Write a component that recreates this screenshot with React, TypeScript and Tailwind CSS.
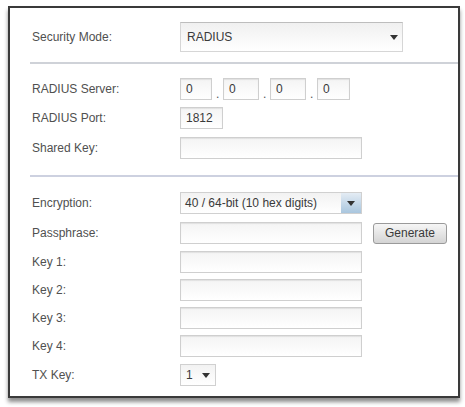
import React from 'react';

const font = { fontFamily: '"Liberation Sans", Arial, sans-serif' };

const Label: React.FC<{ text: string }> = ({ text }) => (
  <div className="w-[148px] shrink-0 text-[12px] text-[#505050] leading-none">{text}</div>
);

const Input: React.FC<{ w: string; value?: string }> = ({ w, value }) => (
  <div
    className={`${w} h-[22px] border border-[#cfcfcf] bg-gradient-to-b from-[#f4f4f4] to-white shadow-[inset_0_1px_1px_rgba(0,0,0,0.08)] px-[5px] flex items-center text-[12px] text-[#3a3a3a]`}
  >
    {value}
  </div>
);

const Arrow: React.FC = () => (
  <svg width="8" height="5" viewBox="0 0 8 5">
    <path d="M0 0 L8 0 L4 5 Z" fill="#333" />
  </svg>
);

const Row: React.FC<{ label: string; children: React.ReactNode; className?: string }> = ({
  label,
  children,
  className,
}) => (
  <div className={`flex items-center h-[22px] ${className ?? 'mb-[6px]'}`}>
    <Label text={label} />
    {children}
  </div>
);

const Dot: React.FC = () => (
  <span className="w-[3px] text-[12px] text-[#555] leading-none">.</span>
);

const App: React.FC = () => {
  return (
    <div className="w-[465px] h-[407px] bg-white pt-[6px] pl-[8px]" style={font}>
      <div className="w-[452px] h-[392px] border-2 border-[#3a3a3a] bg-white shadow-[0_4px_4px_rgba(0,0,0,0.45)] pt-[14px]">
        {/* Security mode */}
        <div className="flex items-center h-[30px] pl-[22px]">
          <Label text="Security Mode:" />
          <div className="w-[223px] h-[30px] border border-[#d6d6d6] border-t-[#bdbdbd] bg-gradient-to-b from-[#f0f0f0] to-white flex items-center justify-between pl-[6px] pr-[4px] text-[12px] text-[#3a3a3a]">
            <span>RADIUS</span>
            <Arrow />
          </div>
        </div>

        <div className="ml-[20px] mt-[10px] h-[2px] bg-[#cfd2d8]" />

        <div className="pl-[22px] pt-[14px]">
          <Row label="RADIUS Server:" className="mb-[7px]">
            <div className="flex items-end gap-[4px]">
              <Input w="w-[32px]" value="0" />
              <Dot />
              <Input w="w-[36px]" value="0" />
              <Dot />
              <Input w="w-[36px]" value="0" />
              <Dot />
              <Input w="w-[33px]" value="0" />
            </div>
          </Row>
          <Row label="RADIUS Port:" className="mb-[8px]">
            <Input w="w-[43px]" value="1812" />
          </Row>
          <Row label="Shared Key:" className="mb-0">
            <Input w="w-[182px]" />
          </Row>
        </div>

        <div className="ml-[20px] mt-[16px] h-[2px] bg-[#cdd1e0]" />

        <div className="pl-[22px] pt-[15px]">
          <Row label="Encryption:" className="mb-[8px]">
            <div className="w-[182px] h-[22px] border border-[#d0d0d0] bg-gradient-to-b from-[#f2f2f2] to-white flex items-center justify-between pl-[4px] text-[12px] text-[#3a3a3a]">
              <span>40 / 64-bit (10 hex digits)</span>
              <div className="w-[20px] h-full bg-gradient-to-b from-[#e4ecf4] to-[#a9c6de] flex items-center justify-center">
                <Arrow />
              </div>
            </div>
          </Row>
          <Row label="Passphrase:" className="mb-[7px]">
            <Input w="w-[182px]" />
            <div className="ml-[11px] w-[74px] h-[21px] border border-[#9a9a9a] rounded-[3px] bg-gradient-to-b from-[#f6f6f6] to-[#d4d4d4] flex items-center justify-center text-[12px] text-[#3a3a3a]">
              Generate
            </div>
          </Row>
          <Row label="Key 1:">
            <Input w="w-[182px]" />
          </Row>
          <Row label="Key 2:">
            <Input w="w-[182px]" />
          </Row>
          <Row label="Key 3:">
            <Input w="w-[182px]" />
          </Row>
          <Row label="Key 4:" className="mb-[7px]">
            <Input w="w-[182px]" />
          </Row>
          <Row label="TX Key:" className="mb-0">
            <div className="w-[36px] h-[22px] border border-[#d0d0d0] bg-gradient-to-b from-[#f2f2f2] to-white flex items-center justify-between pl-[5px] pr-[5px] text-[12px] text-[#3a3a3a]">
              <span>1</span>
              <Arrow />
            </div>
          </Row>
        </div>
      </div>
    </div>
  );
};

export default App;
